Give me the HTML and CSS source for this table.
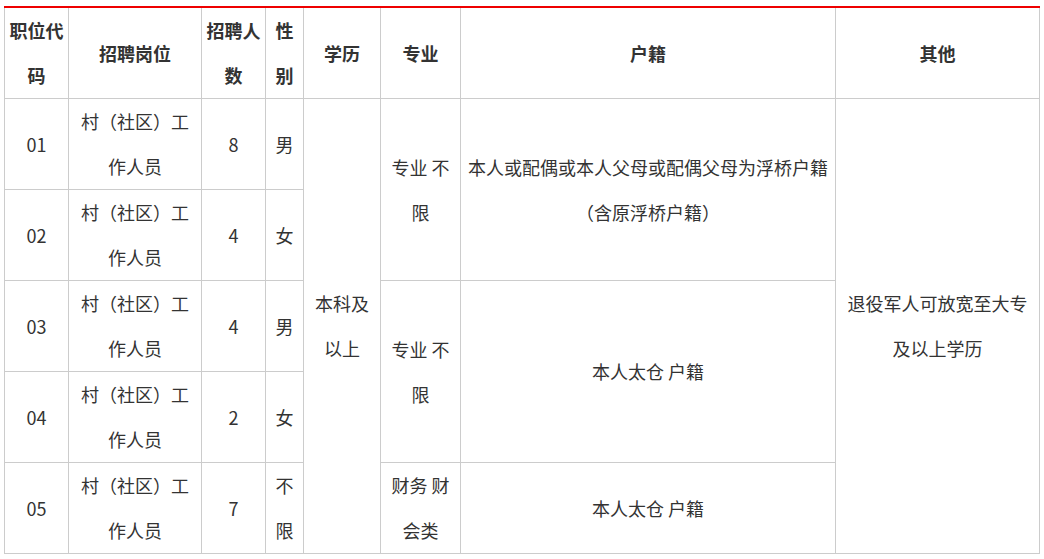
FILE: index.html
```html
<!DOCTYPE html>
<html lang="zh-CN">
<head>
<meta charset="utf-8">
<link rel="stylesheet" href="styles.css">
</head>
<body>
<div class="wrap">
<table class="jobs">
<colgroup>
<col class="c1"><col class="c2"><col class="c3"><col class="c4"><col class="c5"><col class="c6"><col class="c7"><col class="c8">
</colgroup>
<thead>
<tr>
<th>职位代码</th><th>招聘岗位</th><th>招聘人数</th><th>性别</th><th>学历</th><th>专业</th><th>户籍</th><th>其他</th>
</tr>
</thead>
<tbody>
<tr>
<td>01</td><td>村（社区）工作人员</td><td>8</td><td>男</td>
<td rowspan="5">本科及以上</td>
<td rowspan="2">专业 不限</td>
<td rowspan="2">本人或配偶或本人父母或配偶父母为浮桥户籍（含原浮桥户籍）</td>
<td rowspan="5">退役军人可放宽至大专及以上学历</td>
</tr>
<tr>
<td>02</td><td>村（社区）工作人员</td><td>4</td><td>女</td>
</tr>
<tr>
<td>03</td><td>村（社区）工作人员</td><td>4</td><td>男</td>
<td rowspan="2">专业 不限</td>
<td rowspan="2">本人太仓 户籍</td>
</tr>
<tr>
<td>04</td><td>村（社区）工作人员</td><td>2</td><td>女</td>
</tr>
<tr>
<td>05</td><td>村（社区）工作人员</td><td>7</td><td>不限</td>
<td>财务 财会类</td>
<td>本人太仓 户籍</td>
</tr>
</tbody>
</table>
</div>
</body>
</html>
```

FILE: styles.css
```css
html, body {
  margin: 0;
  padding: 0;
  background: #fff;
}
.wrap {
  padding: 6px 4px 0 4px;
}
.jobs {
  border-collapse: collapse;
  table-layout: fixed;
  width: 1036px;
  font-family: "Noto Sans CJK SC", "Microsoft YaHei", sans-serif;
  font-size: 18px;
  line-height: 45px;
  color: #333;
}
.c1 { width: 64px; }
.c2 { width: 133px; }
.c3 { width: 64px; }
.c4 { width: 38px; }
.c5 { width: 77px; }
.c6 { width: 80px; }
.c7 { width: 375px; }
.c8 { width: 204px; }
.jobs th, .jobs td {
  border: 1px solid #ccc;
  padding: 0 5px;
  text-align: center;
  vertical-align: middle;
  word-break: break-all;
}
.jobs th {
  font-weight: bold;
  border-top: 2px solid #e00;
  height: 90px;
  padding: 0 1px;
}
.jobs td {
  height: 90px;
}
```
